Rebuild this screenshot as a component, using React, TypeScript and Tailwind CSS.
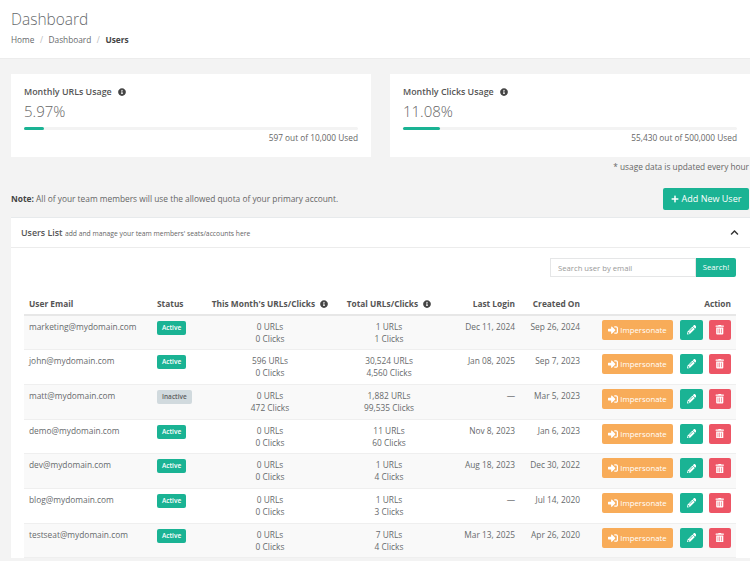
import { FaInfoCircle, FaPlus, FaSignInAlt, FaPencilAlt, FaTrashAlt, FaChevronUp } from 'react-icons/fa';

// Users page: usage cards + team members table

interface UserRow {
  email: string;
  active: boolean;
  monthUrls: string;
  monthClicks: string;
  totalUrls: string;
  totalClicks: string;
  lastLogin: string;
  createdOn: string;
}

const users: UserRow[] = [
  { email: 'marketing@mydomain.com', active: true, monthUrls: '0 URLs', monthClicks: '0 Clicks', totalUrls: '1 URLs', totalClicks: '1 Clicks', lastLogin: 'Dec 11, 2024', createdOn: 'Sep 26, 2024' },
  { email: 'john@mydomain.com', active: true, monthUrls: '596 URLs', monthClicks: '0 Clicks', totalUrls: '30,524 URLs', totalClicks: '4,560 Clicks', lastLogin: 'Jan 08, 2025', createdOn: 'Sep 7, 2023' },
  { email: 'matt@mydomain.com', active: false, monthUrls: '0 URLs', monthClicks: '472 Clicks', totalUrls: '1,882 URLs', totalClicks: '99,535 Clicks', lastLogin: '—', createdOn: 'Mar 5, 2023' },
  { email: 'demo@mydomain.com', active: true, monthUrls: '0 URLs', monthClicks: '0 Clicks', totalUrls: '11 URLs', totalClicks: '60 Clicks', lastLogin: 'Nov 8, 2023', createdOn: 'Jan 6, 2023' },
  { email: 'dev@mydomain.com', active: true, monthUrls: '0 URLs', monthClicks: '0 Clicks', totalUrls: '1 URLs', totalClicks: '4 Clicks', lastLogin: 'Aug 18, 2023', createdOn: 'Dec 30, 2022' },
  { email: 'blog@mydomain.com', active: true, monthUrls: '0 URLs', monthClicks: '0 Clicks', totalUrls: '1 URLs', totalClicks: '3 Clicks', lastLogin: '—', createdOn: 'Jul 14, 2020' },
  { email: 'testseat@mydomain.com', active: true, monthUrls: '0 URLs', monthClicks: '0 Clicks', totalUrls: '7 URLs', totalClicks: '4 Clicks', lastLogin: 'Mar 13, 2025', createdOn: 'Apr 26, 2020' },
];

function UsageCard({ title, percent, width, used, className }: { title: string; percent: string; width: string; used: string; className: string }) {
  return (
    <div className={`bg-white h-[83px] px-[13px] pt-[11px] ${className}`}>
      <div className="flex items-center gap-[6px] text-[8.9px] leading-[14px] font-semibold text-[#555]">
        {title}
        <FaInfoCircle className="text-[8px] text-[#444]" />
      </div>
      <div className="text-[15px] leading-[22px] mt-[1px] font-light text-[#666]">{percent}</div>
      <div className="h-[3px] mt-[5px] bg-[#f3f3f3] rounded-sm">
        <div className="h-full bg-[#1ab394] rounded-sm" style={{ width }} />
      </div>
      <div className="text-right text-[8.3px] leading-[12px] mt-[2px] text-[#666]">{used}</div>
    </div>
  );
}

export default function App() {
  return (
    <div className="h-[561px] w-[750px] overflow-hidden bg-[#f3f3f3] font-['Open_Sans',sans-serif] text-[#676a6c]">
      {/* Header */}
      <div className="bg-white h-[59px] px-[11px] pt-[9px] border-b border-[#ececec]">
        <h1 className="text-[15.5px] leading-[20px] font-light text-[#676a6c]">Dashboard</h1>
        <div className="flex items-center mt-[5px] text-[8.3px] leading-[12px] text-[#676a6c]">
          <span>Home</span>
          <span className="mx-[5.5px] text-[#bbb]">/</span>
          <span>Dashboard</span>
          <span className="mx-[5.5px] text-[#bbb]">/</span>
          <span className="font-bold text-[#444]">Users</span>
        </div>
      </div>

      {/* Usage cards */}
      <div className="flex pl-[11px] pt-[15px]">
        <UsageCard className="w-[360px]" title="Monthly URLs Usage" percent="5.97%" width="5.97%" used="597 out of 10,000 Used" />
        <UsageCard className="w-[360px] ml-[19px] pr-[13px]" title="Monthly Clicks Usage" percent="11.08%" width="11.08%" used="55,430 out of 500,000 Used" />
      </div>
      <div className="text-right text-[8.3px] leading-[12px] mt-[4px] pr-[1px] text-[#666]">* usage data is updated every hour</div>

      {/* Note + add button */}
      <div className="flex items-center justify-between pl-[11px] pr-[1px] mt-[15px] h-[22px]">
        <p className="text-[8.35px] text-[#666]"><b className="font-bold text-[#444]">Note:</b> All of your team members will use the allowed quota of your primary account.</p>
        <button className="w-[86px] h-[22px] flex items-center justify-center gap-[3px] rounded-[2px] bg-[#1ab394] text-white text-[9px]">
          <FaPlus className="text-[8px]" /> Add New User
        </button>
      </div>

      {/* Users panel */}
      <div className="ml-[11px] mt-[7px] bg-white border-t border-[#e7eaec]">
        <div className="h-[30px] flex items-center justify-between px-[10px] border-b border-[#ececec]">
          <div className="text-[8.9px] font-semibold text-[#555]">
            Users List <span className="text-[6.75px] font-normal text-[#666]">add and manage your team members' seats/accounts here</span>
          </div>
          <FaChevronUp className="text-[9px] text-[#333] mr-[1px]" />
        </div>
        <div className="pl-[13px] pr-[14px] pt-[10px]">
          <div className="flex justify-end">
            <input placeholder="Search user by email" className="w-[146px] h-[19px] pl-[7px] text-[7.7px] border border-[#e5e6e7] outline-none placeholder:text-[#999]" />
            <button className="w-[40px] h-[19px] bg-[#1ab394] text-white text-[7.7px] rounded-r-[2px]">Search!</button>
          </div>
          <table className="w-[712px] mt-[17px] table-fixed border-collapse text-[8.35px] leading-[12px] text-[#676a6c]">
            <thead>
              <tr className="h-[21px] border-b-2 border-[#e7e7e7] text-[#555] font-bold">
                <th className="w-[133px] pl-[5px] text-left font-bold">User Email</th>
                <th className="w-[50px] text-left font-bold">Status</th>
                <th className="w-[126px] text-center font-bold whitespace-nowrap">
                  This Month's URLs/Clicks <FaInfoCircle className="inline text-[8px] ml-[3px] text-[#444] align-[-1px]" />
                </th>
                <th className="w-[112px] text-center font-bold whitespace-nowrap">
                  Total URLs/Clicks <FaInfoCircle className="inline text-[8px] ml-[3px] text-[#444] align-[-1px]" />
                </th>
                <th className="w-[70px] text-right font-bold">Last Login</th>
                <th className="w-[65px] text-right font-bold">Created On</th>
                <th className="text-right pr-[5px] font-bold">Action</th>
              </tr>
            </thead>
            <tbody>
              {users.map((u, i) => (
                <tr key={u.email} className={`h-[34.7px] border-b border-[#efefef] align-top ${i % 2 === 0 ? 'bg-[#f9f9f9]' : 'bg-white'}`}>
                  <td className="pl-[5px] pt-[5px]">{u.email}</td>
                  <td className="pt-[5px]">
                    {u.active ? (
                      <span className="inline-block px-[5px] py-[1px] rounded-[2px] bg-[#1ab394] text-white text-[6.5px] font-semibold">Active</span>
                    ) : (
                      <span className="inline-block px-[5px] py-[1px] rounded-[2px] bg-[#d1dade] text-[#5e5e5e] text-[6.5px] font-semibold">Inactive</span>
                    )}
                  </td>
                  <td className="pt-[5px] text-center">{u.monthUrls}<br />{u.monthClicks}</td>
                  <td className="pt-[5px] text-center">{u.totalUrls}<br />{u.totalClicks}</td>
                  <td className="pt-[5px] text-right">{u.lastLogin}</td>
                  <td className="pt-[5px] text-right">{u.createdOn}</td>
                  <td className="pt-[4px] pr-[5px]">
                    <div className="flex justify-end items-center">
                      <button className="w-[71px] h-[20px] flex items-center justify-center gap-[2px] rounded-[2px] bg-[#f8ac59] text-white text-[7.8px]">
                        <FaSignInAlt className="text-[10px]" /> Impersonate
                      </button>
                      <button className="w-[23px] h-[20px] ml-[7px] flex items-center justify-center rounded-[2px] bg-[#1ab394] text-white">
                        <FaPencilAlt className="text-[9.5px]" />
                      </button>
                      <button className="w-[22px] h-[20px] ml-[6px] flex items-center justify-center rounded-[2px] bg-[#ed5565] text-white">
                        <FaTrashAlt className="text-[9.5px]" />
                      </button>
                    </div>
                  </td>
                </tr>
              ))}
            </tbody>
          </table>
        </div>
      </div>
    </div>
  );
}
